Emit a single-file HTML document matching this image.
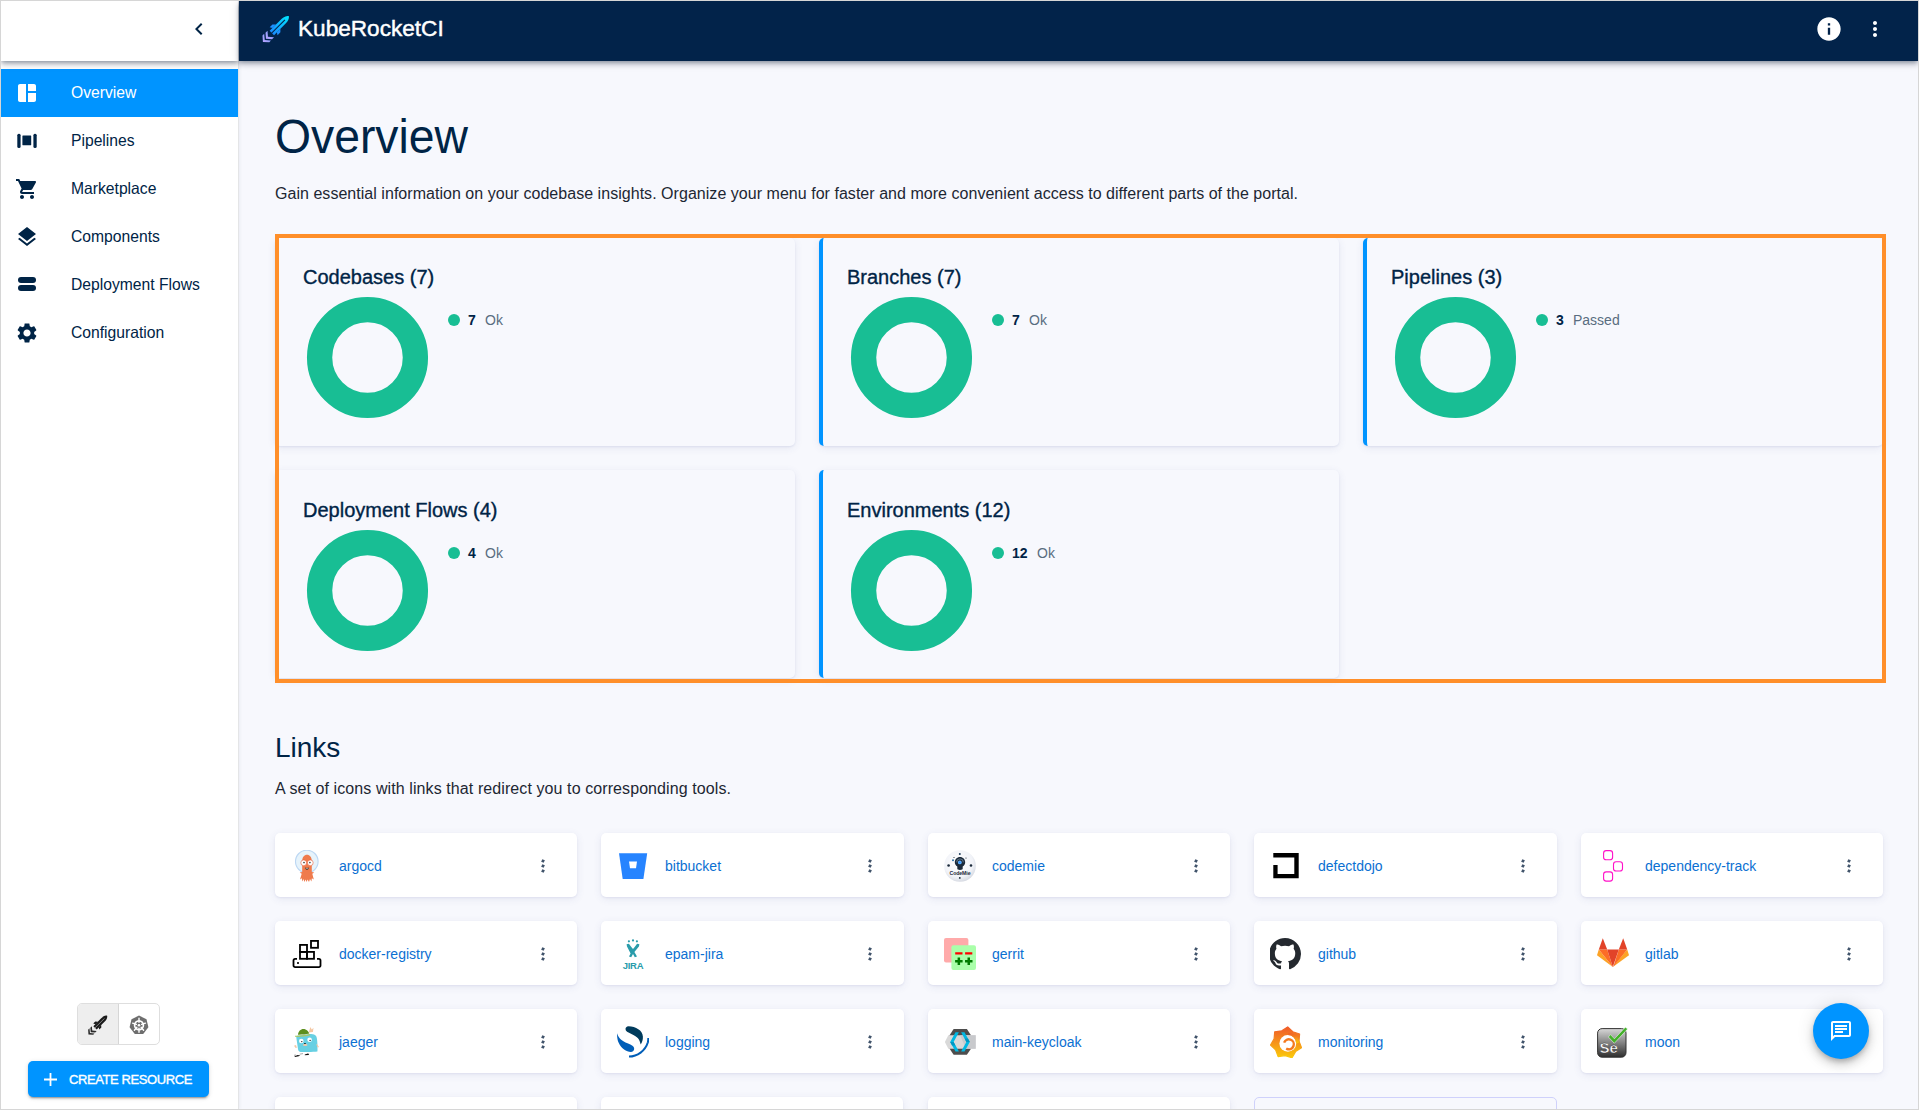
<!DOCTYPE html>
<html><head><meta charset="utf-8">
<style>
*{box-sizing:border-box;margin:0;padding:0}
html,body{width:1919px;height:1110px;overflow:hidden}
body{position:relative;background:#f7f8fd;font-family:"Liberation Sans",sans-serif;color:#002446}
.a{position:absolute}
.t{position:absolute;white-space:nowrap}
#frame{left:0;top:0;width:1919px;height:1110px;border:1px solid #d6d6d6;z-index:50;pointer-events:none}
#sb{left:1px;top:1px;width:238px;height:1108px;background:#fff;border-right:1px solid #e4e5e7;z-index:5;box-shadow:1px 0 3px rgba(40,50,90,.06)}
#topbar{left:1px;top:1px;width:1917px;height:60px;z-index:10}
#hdr{left:238px;top:0;width:1679px;height:60px;background:#02234a;box-shadow:0 2px 4px -1px rgba(10,25,50,.32),0 4px 5px 0 rgba(10,25,50,.16),0 1px 10px 0 rgba(10,25,50,.12)}
#drawerhead{left:0;top:0;width:237px;height:60px;background:#fff;box-shadow:0 2px 4px -1px rgba(10,25,50,.32),0 4px 5px 0 rgba(10,25,50,.16),0 1px 10px 0 rgba(10,25,50,.12)}
.nav{position:absolute;left:0;width:237px;height:48px}
.nav.act{background:#0094ff}
.nav svg{position:absolute;left:14px;top:12px;width:24px;height:24px;fill:#002446}
.nav.act svg{fill:#fff}
.nav span{position:absolute;left:70px;top:15.3px;font-size:16.5px;line-height:16px;transform:scaleX(.95);transform-origin:0 0;color:#002446;white-space:nowrap}
.nav.act span{color:#fff}
.card{position:absolute;width:520px;height:208px;background:#f7f8fd;border-radius:5px;box-shadow:0 1px 2px rgba(60,70,140,.09),0 2px 9px rgba(60,70,140,.09)}
.card.bl{border-left:4px solid #0094ff}
.card .ti{position:absolute;left:28px;top:28.7px;font-size:20px;line-height:20px;font-weight:400;-webkit-text-stroke:.35px #002446;color:#002446;white-space:nowrap}
.card svg.donut{position:absolute;left:31px;top:58px}
.card .bl4{left:24px}
.leg{position:absolute;top:75px;left:173px;height:14px;white-space:nowrap;font-size:14px;line-height:14px}
.leg i{position:absolute;left:0;top:1px;width:12px;height:12px;border-radius:50%;background:#18be94}
.leg b{position:absolute;left:20px;top:0;color:#002446}
.leg em{position:absolute;font-style:normal;top:0;color:#596d80}
.lc{position:absolute;width:302px;height:64px;background:#fff;border-radius:5px;box-shadow:0 1px 2px rgba(60,70,140,.08),0 2px 9px rgba(60,70,140,.09)}
.lc .ic{position:absolute;left:16px;top:17px;width:32px;height:32px}
.lc .lt{position:absolute;left:64px;top:26px;font-size:14px;line-height:14px;color:#0b70d2;white-space:nowrap}
.lc .kb{position:absolute;right:28px;top:23px;width:12px;height:20px;fill:#41546b}
</style></head><body>
<div id="frame" class="a"></div>

<!-- sidebar -->
<div id="sb" class="a">
  <div class="nav act" style="top:68px">
    <svg viewBox="0 0 24 24"><path d="M11 21H5c-1.1 0-2-.9-2-2V5c0-1.1.9-2 2-2h6v18zm2 0h6c1.1 0 2-.9 2-2v-7h-8v9zm8-11V5c0-1.1-.9-2-2-2h-6v7h8z"/></svg>
    <span>Overview</span>
  </div>
  <div class="nav" style="top:116px">
    <svg viewBox="0 0 24 24"><rect x="2.3" y="4.8" width="3.3" height="14.2" rx="1.5"/><rect x="18.4" y="4.8" width="3.3" height="14.2" rx="1.5"/><rect x="7.4" y="6.6" width="8.8" height="9.6" rx=".4"/></svg>
    <span>Pipelines</span>
  </div>
  <div class="nav" style="top:164px">
    <svg viewBox="0 0 24 24"><path d="M7 18c-1.1 0-1.99.9-1.99 2S5.9 22 7 22s2-.9 2-2-.9-2-2-2zM1 2v2h2l3.6 7.59-1.35 2.45c-.16.28-.25.61-.25.96 0 1.1.9 2 2 2h12v-2H7.42c-.14 0-.25-.11-.25-.25l.03-.12.9-1.63h7.45c.75 0 1.41-.41 1.75-1.03l3.58-6.49c.08-.14.12-.31.12-.48 0-.55-.45-1-1-1H5.21l-.94-2H1zm16 16c-1.1 0-1.99.9-1.99 2s.89 2 1.99 2 2-.9 2-2-.9-2-2-2z"/></svg>
    <span>Marketplace</span>
  </div>
  <div class="nav" style="top:212px">
    <svg viewBox="0 0 24 24"><path d="M11.99 18.54l-7.37-5.73L3 14.07l9 7 9-7-1.63-1.27-7.38 5.74zM12 16l7.36-5.73L21 9l-9-7-9 7 1.63 1.27L12 16z"/></svg>
    <span>Components</span>
  </div>
  <div class="nav" style="top:260px">
    <svg viewBox="0 0 24 24"><rect x="3" y="4" width="18" height="6" rx="3"/><rect x="3" y="12" width="18" height="6" rx="3"/></svg>
    <span>Deployment Flows</span>
  </div>
  <div class="nav" style="top:308px">
    <svg viewBox="0 0 24 24"><path d="M19.14 12.94c.04-.3.06-.61.06-.94 0-.32-.02-.64-.07-.94l2.03-1.58c.18-.14.23-.41.12-.61l-1.92-3.32c-.12-.22-.37-.29-.59-.22l-2.39.96c-.5-.38-1.03-.7-1.62-.94l-.36-2.54c-.04-.24-.24-.41-.48-.41h-3.84c-.24 0-.43.17-.47.41l-.36 2.54c-.59.24-1.13.57-1.62.94l-2.39-.96c-.22-.08-.47 0-.59.22L2.74 8.87c-.12.21-.08.47.12.61l2.03 1.58c-.05.3-.09.63-.09.94s.02.64.07.94l-2.03 1.58c-.18.14-.23.41-.12.61l1.92 3.32c.12.22.37.29.59.22l2.39-.96c.5.38 1.03.7 1.62.94l.36 2.54c.05.24.24.41.48.41h3.84c.24 0 .44-.17.47-.41l.36-2.54c.59-.24 1.13-.56 1.62-.94l2.39.96c.22.08.47 0 .59-.22l1.92-3.32c.12-.22.07-.47-.12-.61l-2.01-1.58zM12 15.6c-1.98 0-3.6-1.62-3.6-3.6s1.62-3.6 3.6-3.6 3.6 1.62 3.6 3.6-1.62 3.6-3.6 3.6z"/></svg>
    <span>Configuration</span>
  </div>

  <!-- toggle group -->
  <div class="a" style="left:76px;top:1002px;width:83px;height:42px;border:1px solid #dedede;border-radius:5px;overflow:hidden;background:#fff">
    <div class="a" style="left:0;top:0;width:41px;height:40px;background:#eeeeee;border-right:1px solid #d6d6d6"></div>
    <svg class="a" style="left:10px;top:11px" width="20" height="20" viewBox="0 0 28 28">
      <g transform="translate(26.8 1) rotate(45)">
        <path d="M0 0C3.2 2 3.4 6 3.3 9V24H-3.3V9C-3.4 6-3.2 2 0 0z" fill="#1b1b1b"/>
        <path d="M0 5.5V25" stroke="#9a9a9a" stroke-width="1.1"/>
        <path d="M-3.1 15-6 17.5V21.5L-3.1 20zM3.1 15 6 17.5V21.5L3.1 20z" fill="#1b1b1b"/>
        <path d="M-4.8 25.5 0 29.5 4.8 25.5V28.5L0 32.5-4.8 28.5z" fill="#2a2a2a"/>
        <path d="M-5 30 0 34 5 30V32.6L0 37-5 32.6z" fill="#2a2a2a"/>
      </g>
    </svg>
    <svg class="a" style="left:51px;top:11px" width="20" height="20" viewBox="0 0 20 20">
      <path d="M10 .6 17.5 4.2 19.4 12.3 14.2 18.9H5.8L.6 12.3 2.5 4.2z" fill="#6e6e6e"/>
      <circle cx="10" cy="10.2" r="4.4" fill="none" stroke="#fff" stroke-width="1.7"/>
      <path d="M10 3.3v4M10 13.2v4M3.6 8.2l3.8 1.2M16.4 8.2l-3.8 1.2M5.4 15.3l2.5-3M14.6 15.3l-2.5-3M10 10.2" stroke="#fff" stroke-width="1.4" stroke-linecap="round"/>
      <circle cx="10" cy="10.2" r="1.3" fill="#fff"/>
    </svg>
  </div>
  <!-- create resource -->
  <div class="a" style="left:27px;top:1060px;width:181px;height:36px;background:#0094ff;border-radius:5px;box-shadow:0 3px 1px -2px rgba(0,0,0,.2),0 2px 2px 0 rgba(0,0,0,.14),0 1px 5px 0 rgba(0,0,0,.12)">
    <svg class="a" style="left:16px;top:11.5px" width="13" height="13" viewBox="0 0 13 13"><path d="M5.6 0h1.8v5.6H13v1.8H7.4V13H5.6V7.4H0V5.6h5.6z" fill="#fff"/></svg>
    <div class="t" style="left:41px;top:12px;font-size:13px;line-height:13px;color:#fff;letter-spacing:-.4px;-webkit-text-stroke:.35px #fff">CREATE RESOURCE</div>
  </div>
</div>

<!-- top bar -->
<div id="topbar" class="a">
  <div id="drawerhead" class="a">
    <svg class="a" style="left:186px;top:16px" width="24" height="24" viewBox="0 0 24 24"><path d="M15.41 7.41 14 6l-6 6 6 6 1.41-1.41L10.83 12z" fill="#002446"/></svg>
  </div>
  <div id="hdr" class="a">
    <svg class="a" style="left:23px;top:14px" width="28" height="28" viewBox="0 0 28 28">
      <defs><linearGradient id="rg" x1="0" y1="0" x2="0" y2="1"><stop offset="0" stop-color="#00e8ff"/><stop offset="1" stop-color="#1a8cff"/></linearGradient>
      <linearGradient id="rg2" x1="0" y1="0" x2="0" y2="1"><stop offset="0" stop-color="#8fa0ff"/><stop offset="1" stop-color="#b9a2ff"/></linearGradient></defs>
      <g transform="translate(26.8 1) rotate(45)">
        <path d="M0 0C3 2 3.2 6 3.1 9V24H-3.1V9C-3.2 6-3 2 0 0z" fill="url(#rg)"/>
        <path d="M0 5.5V25" stroke="#02234a" stroke-width="1.1"/>
        <path d="M-3.1 15-5.6 17.5V21.5L-3.1 20zM3.1 15 5.6 17.5V21.5L3.1 20z" fill="#1f8fff"/>
        <path d="M-4.6 25.5 0 29.5 4.6 25.5V28.3L0 32.3-4.6 28.3z" fill="url(#rg2)"/>
        <path d="M-4.8 30 0 34 4.8 30V32.4L0 36.6-4.8 32.4z" fill="url(#rg2)"/>
      </g>
    </svg>
    <div class="t" style="left:59px;top:17px;font-size:22.6px;line-height:21px;font-weight:400;-webkit-text-stroke:.45px #fff;color:#fff">KubeRocketCI</div>
    <svg class="a" style="left:1576px;top:14px" width="28" height="28" viewBox="0 0 24 24"><path d="M12 2C6.48 2 2 6.48 2 12s4.48 10 10 10 10-4.48 10-10S17.52 2 12 2zm1 15h-2v-6h2v6zm0-8h-2V7h2v2z" fill="#fff"/></svg>
    <svg class="a" style="left:1624px;top:16px" width="24" height="24" viewBox="0 0 24 24"><path d="M12 8c1.1 0 2-.9 2-2s-.9-2-2-2-2 .9-2 2 .9 2 2 2zm0 2c-1.1 0-2 .9-2 2s.9 2 2 2 2-.9 2-2-.9-2-2-2zm0 6c-1.1 0-2 .9-2 2s.9 2 2 2 2-.9 2-2-.9-2-2-2z" fill="#fff"/></svg>
  </div>
</div>

<!-- main -->
<div class="t" style="left:275px;top:113px;font-size:49px;line-height:46px;color:#002446;transform:scaleX(.945);transform-origin:0 0">Overview</div>
<div class="t" style="left:275px;top:186px;font-size:16px;line-height:16px;letter-spacing:.035px;color:#1d2733">Gain essential information on your codebase insights. Organize your menu for faster and more convenient access to different parts of the portal.</div>

<!-- overview grid -->
<div class="card" style="left:275px;top:238px">
  <div class="ti">Codebases (7)</div>
  <svg class="donut" width="123" height="123" viewBox="0 0 123 123"><circle cx="61.5" cy="61.5" r="47.9" fill="none" stroke="#18be94" stroke-width="25.3"/></svg>
  <div class="leg"><i></i><b>7</b><em style="left:37px">Ok</em></div>
</div>
<div class="card bl" style="left:819px;top:238px">
  <div class="ti" style="left:24px">Branches (7)</div>
  <svg class="donut" style="left:27px" width="123" height="123" viewBox="0 0 123 123"><circle cx="61.5" cy="61.5" r="47.9" fill="none" stroke="#18be94" stroke-width="25.3"/></svg>
  <div class="leg" style="left:169px"><i></i><b>7</b><em style="left:37px">Ok</em></div>
</div>
<div class="card bl" style="left:1363px;top:238px">
  <div class="ti" style="left:24px">Pipelines (3)</div>
  <svg class="donut" style="left:27px" width="123" height="123" viewBox="0 0 123 123"><circle cx="61.5" cy="61.5" r="47.9" fill="none" stroke="#18be94" stroke-width="25.3"/></svg>
  <div class="leg" style="left:169px"><i></i><b>3</b><em style="left:37px">Passed</em></div>
</div>
<div class="card" style="left:275px;top:470px">
  <div class="ti" style="top:29.5px">Deployment Flows (4)</div>
  <svg class="donut" style="top:59px" width="123" height="123" viewBox="0 0 123 123"><circle cx="61.5" cy="61.5" r="47.9" fill="none" stroke="#18be94" stroke-width="25.3"/></svg>
  <div class="leg" style="top:76px"><i></i><b>4</b><em style="left:37px">Ok</em></div>
</div>
<div class="card bl" style="left:819px;top:470px">
  <div class="ti" style="left:24px;top:29.5px">Environments (12)</div>
  <svg class="donut" style="left:27px;top:59px" width="123" height="123" viewBox="0 0 123 123"><circle cx="61.5" cy="61.5" r="47.9" fill="none" stroke="#18be94" stroke-width="25.3"/></svg>
  <div class="leg" style="left:169px;top:76px"><i></i><b>12</b><em style="left:45px">Ok</em></div>
</div>
<div class="a" style="left:275px;top:234px;width:1611px;height:449px;border:4px solid #ff8f2a;z-index:3"></div>

<!-- links -->
<div class="t" style="left:275px;top:734px;font-size:28px;line-height:28px;color:#002446">Links</div>
<div class="t" style="left:275px;top:781px;font-size:16px;line-height:16px;letter-spacing:.09px;color:#1d2733">A set of icons with links that redirect you to corresponding tools.</div>

<!-- row 1 -->
<div class="lc" style="left:275px;top:833px">
  <svg class="ic" viewBox="0 0 32 32">
    <circle cx="15.8" cy="11.5" r="11.3" fill="#e6f3fb" stroke="#bcd7f3" stroke-width="1.1"/>
    <path d="M11.2 11C11.2 7 13.3 4.7 16 4.7S20.8 7 20.8 11V22L23.3 22.6 21.3 23.8 22.8 29.6 20.9 28.2 20.4 31.6 19 29 18 32 16.6 29.4 15.6 32 14.6 29.4 13.3 32 12.6 29 11.2 31.6 10.9 28.2 9 29.6 10.7 23.8 8.7 22.6 11.2 22z" fill="#ef7b4d"/>
    <circle cx="12.7" cy="12.8" r="2.9" fill="#fff" stroke="#e8603a" stroke-width=".6"/><circle cx="19.3" cy="12.8" r="2.9" fill="#fff" stroke="#e8603a" stroke-width=".6"/>
    <circle cx="13" cy="12.6" r=".8" fill="#333"/><circle cx="18.9" cy="12.6" r=".8" fill="#333"/>
    <path d="M14 17.6c1.4.5 2.6.5 4 0-.3 1.6-1.1 2.2-2 2.2s-1.7-.6-2-2.2z" fill="#222"/><path d="M14.6 17.7c.9.3 1.9.3 2.8 0l-.2.7c-.8.2-1.6.2-2.4 0z" fill="#fff"/>
  </svg>
  <div class="lt">argocd</div>
  <svg class="kb" viewBox="0 0 12 20"><rect x="4.6" y="3.6" width="2.8" height="2.8" transform="rotate(25 6 5)"/><rect x="4.6" y="8.6" width="2.8" height="2.8" transform="rotate(25 6 10)"/><rect x="4.6" y="13.6" width="2.8" height="2.8" transform="rotate(25 6 15)"/></svg>
</div>
<div class="lc" style="left:601px;top:833px;width:303px">
  <svg class="ic" viewBox="0 0 32 32">
    <path d="M2 3.2h28.2L26.4 29H5.7z" fill="#2684ff"/>
    <path d="M12 11.5h8l-1 6.8h-6z" fill="#fff"/>
  </svg>
  <div class="lt">bitbucket</div>
  <svg class="kb" viewBox="0 0 12 20"><rect x="4.6" y="3.6" width="2.8" height="2.8" transform="rotate(25 6 5)"/><rect x="4.6" y="8.6" width="2.8" height="2.8" transform="rotate(25 6 10)"/><rect x="4.6" y="13.6" width="2.8" height="2.8" transform="rotate(25 6 15)"/></svg>
</div>
<div class="lc" style="left:928px;top:833px">
  <svg class="ic" viewBox="0 0 32 32">
    <defs><radialGradient id="cmg" cx=".45" cy=".4" r=".65"><stop offset="0" stop-color="#fff"/><stop offset=".7" stop-color="#f1f3f8"/><stop offset="1" stop-color="#cfd3dc"/></radialGradient></defs>
    <circle cx="16" cy="16" r="15.8" fill="url(#cmg)"/>
    <path d="M16 7c-3 0-5.2 2.3-5.2 5.2 0 1.9 1 3.4 2.5 4.3v2.3c0 .6.9 1.1 2.7 1.1s2.7-.5 2.7-1.1v-2.3c1.5-.9 2.5-2.4 2.5-4.3C21.2 9.3 19 7 16 7z" fill="#1b2a3a"/>
    <path d="M12.6 12.3a3.4 3.4 0 0 1 6.8 0" fill="none" stroke="#8fa6bb" stroke-width=".6"/>
    <circle cx="15.8" cy="12.4" r="1.9" fill="#5fb0ff"/><circle cx="15.8" cy="12.4" r=".9" fill="#2d8cff"/>
    <circle cx="15.8" cy="4" r="1" fill="#1f3d5c"/><circle cx="4.6" cy="15.5" r="1.3" fill="#1b2a3a"/><circle cx="27" cy="15.5" r="1.3" fill="#1b2a3a"/>
    <circle cx="9" cy="10.3" r="1" fill="#2a6fa5"/><circle cx="22" cy="8" r=".6" fill="#1b2a3a"/><circle cx="10" cy="7.5" r=".6" fill="#1b2a3a"/>
    <text x="16" y="25.2" text-anchor="middle" font-family="Liberation Sans" font-weight="700" font-size="5.2" fill="#1b2a3a" letter-spacing="-.1">CodeMie</text>
    <circle cx="15.8" cy="27.9" r=".9" fill="#1b2a3a"/>
  </svg>
  <div class="lt">codemie</div>
  <svg class="kb" viewBox="0 0 12 20"><rect x="4.6" y="3.6" width="2.8" height="2.8" transform="rotate(25 6 5)"/><rect x="4.6" y="8.6" width="2.8" height="2.8" transform="rotate(25 6 10)"/><rect x="4.6" y="13.6" width="2.8" height="2.8" transform="rotate(25 6 15)"/></svg>
</div>
<div class="lc" style="left:1254px;top:833px;width:303px">
  <svg class="ic" viewBox="0 0 32 32">
    <path d="M3.3 3h25.4v25.3H3.3V15h4.3v9h16.7V7.4H3.3z" fill="#000"/>
  </svg>
  <div class="lt">defectdojo</div>
  <svg class="kb" viewBox="0 0 12 20"><rect x="4.6" y="3.6" width="2.8" height="2.8" transform="rotate(25 6 5)"/><rect x="4.6" y="8.6" width="2.8" height="2.8" transform="rotate(25 6 10)"/><rect x="4.6" y="13.6" width="2.8" height="2.8" transform="rotate(25 6 15)"/></svg>
</div>
<div class="lc" style="left:1581px;top:833px">
  <svg class="ic" viewBox="0 0 32 32" fill="none" stroke="#ff10c8" stroke-width="1.1">
    <rect x="6.6" y=".6" width="9" height="9.2" rx="2.6"/>
    <rect x="16.5" y="11.8" width="9" height="9.2" rx="2.6"/>
    <rect x="6.6" y="21.9" width="9" height="9.2" rx="2.6"/>
  </svg>
  <div class="lt">dependency-track</div>
  <svg class="kb" viewBox="0 0 12 20"><rect x="4.6" y="3.6" width="2.8" height="2.8" transform="rotate(25 6 5)"/><rect x="4.6" y="8.6" width="2.8" height="2.8" transform="rotate(25 6 10)"/><rect x="4.6" y="13.6" width="2.8" height="2.8" transform="rotate(25 6 15)"/></svg>
</div>

<!-- row 2 -->
<div class="lc" style="left:275px;top:921px">
  <svg class="ic" viewBox="0 0 32 32" fill="none" stroke="#000" stroke-width="1.8">
    <rect x="20" y="2.9" width="7" height="6.9"/>
    <rect x="9" y="6.9" width="7" height="7"/>
    <rect x="9" y="13.9" width="7" height="6.9"/>
    <rect x="16" y="13.9" width="7" height="6.9"/>
    <path d="M6 20.8H4.1a1.6 1.6 0 0 0-1.6 1.6v5.2a1.6 1.6 0 0 0 1.6 1.6h23.8a1.6 1.6 0 0 0 1.6-1.6v-5.2a1.6 1.6 0 0 0-1.6-1.6H26"/>
    <rect x="6.1" y="24.1" width="1.8" height="1.8" fill="#000" stroke="none"/>
  </svg>
  <div class="lt">docker-registry</div>
  <svg class="kb" viewBox="0 0 12 20"><rect x="4.6" y="3.6" width="2.8" height="2.8" transform="rotate(25 6 5)"/><rect x="4.6" y="8.6" width="2.8" height="2.8" transform="rotate(25 6 10)"/><rect x="4.6" y="13.6" width="2.8" height="2.8" transform="rotate(25 6 15)"/></svg>
</div>
<div class="lc" style="left:601px;top:921px;width:303px">
  <svg class="ic" viewBox="0 0 32 32">
    <g fill="#2a9cab">
      <circle cx="11.9" cy="3.3" r="1.1"/><circle cx="16" cy="2.4" r="1.1"/><circle cx="19.9" cy="3.3" r="1.1"/>
      <path d="M9.6 6.2l2.3-.5 4.1 5.5 4.1-5.5 2.3.5-.5 2.4-4.5 5.4 2.6 4.6-2.2.6-1.8-3.2-1.8 3.2-2.2-.6 1.6-3L10 8.6z"/>
      <path d="M14.8 10.5c.4.5.8.7 1.2.7s.8-.2 1.2-.7" stroke="#2a9cab" stroke-width=".6" fill="none"/>
    </g>
    <text x="16" y="31" text-anchor="middle" font-family="Liberation Sans" font-weight="700" font-size="9.5" fill="#2a9cab" letter-spacing="-.3">JIRA</text>
  </svg>
  <div class="lt">epam-jira</div>
  <svg class="kb" viewBox="0 0 12 20"><rect x="4.6" y="3.6" width="2.8" height="2.8" transform="rotate(25 6 5)"/><rect x="4.6" y="8.6" width="2.8" height="2.8" transform="rotate(25 6 10)"/><rect x="4.6" y="13.6" width="2.8" height="2.8" transform="rotate(25 6 15)"/></svg>
</div>
<div class="lc" style="left:928px;top:921px">
  <svg class="ic" viewBox="0 0 32 32">
    <rect x="0" y="0" width="24.4" height="24.4" rx="2" fill="#ffaaaa"/>
    <rect x="7.4" y="7.3" width="24.6" height="24.6" rx="2" fill="#aaffaa"/>
    <path d="M11.2 14.2h7.3v2.4h-7.3zM21.1 14.2h7.2v2.4h-7.2z" fill="#ff0000"/>
    <path d="M13.6 19.6h2.5v2.5h2.5v2.5h-2.5v2.5h-2.5v-2.5h-2.5v-2.5h2.5zM23.5 19.6H26v2.5h2.5v2.5H26v2.5h-2.5v-2.5H21v-2.5h2.5z" fill="#007d00"/>
  </svg>
  <div class="lt">gerrit</div>
  <svg class="kb" viewBox="0 0 12 20"><rect x="4.6" y="3.6" width="2.8" height="2.8" transform="rotate(25 6 5)"/><rect x="4.6" y="8.6" width="2.8" height="2.8" transform="rotate(25 6 10)"/><rect x="4.6" y="13.6" width="2.8" height="2.8" transform="rotate(25 6 15)"/></svg>
</div>
<div class="lc" style="left:1254px;top:921px;width:303px">
  <svg class="ic" viewBox="0 0 32 32">
    <g transform="translate(-1 0) scale(2)"><path d="M8 0C3.58 0 0 3.58 0 8c0 3.54 2.29 6.53 5.47 7.59.4.07.55-.17.55-.38 0-.19-.01-.82-.01-1.49-2.01.37-2.530-.49-2.69-.94-.09-.23-.48-.94-.82-1.13-.28-.15-.68-.52-.01-.53.63-.01 1.08.58 1.23.82.72 1.21 1.87.87 2.33.66.07-.52.28-.87.51-1.07-1.78-.2-3.64-.89-3.640-3.95 0-.87.31-1.59.82-2.15-.08-.2-.36-1.020.08-2.12 0 0 .67-.21 2.2.82.64-.18 1.32-.27 2-.27.68 0 1.36.09 2 .27 1.53-1.04 2.2-.82 2.2-.82.44 1.1.16 1.92.08 2.12.51.56.82 1.27.82 2.15 0 3.07-1.87 3.75-3.65 3.95.29.25.54.73.54 1.48 0 1.07-.01 1.93-.01 2.2 0 .21.15.46.55.38A8.013 8.013 0 0 0 16 8c0-4.42-3.58-8-8-8z" fill="#24292f"/></g>
  </svg>
  <div class="lt">github</div>
  <svg class="kb" viewBox="0 0 12 20"><rect x="4.6" y="3.6" width="2.8" height="2.8" transform="rotate(25 6 5)"/><rect x="4.6" y="8.6" width="2.8" height="2.8" transform="rotate(25 6 10)"/><rect x="4.6" y="13.6" width="2.8" height="2.8" transform="rotate(25 6 15)"/></svg>
</div>
<div class="lc" style="left:1581px;top:921px">
  <svg class="ic" viewBox="0 0 32 32">
    <path d="M1.8 11.6 0 17.3 15.8 28.9z" fill="#fca326"/><path d="M30.2 11.6 32 17.3 15.8 28.9z" fill="#fca326"/>
    <path d="M1.8 11.6h8.4l5.6 17.3z" fill="#fc6d26"/><path d="M30.2 11.6h-8.4l-5.6 17.3z" fill="#fc6d26"/>
    <path d="M10.2 11.6h11.6l-6 17.3z" fill="#e24329"/>
    <path d="M5.8.3 1.8 11.6h8.4z" fill="#e24329"/><path d="M26.2.3l4 11.3h-8.4z" fill="#e24329"/>
  </svg>
  <div class="lt">gitlab</div>
  <svg class="kb" viewBox="0 0 12 20"><rect x="4.6" y="3.6" width="2.8" height="2.8" transform="rotate(25 6 5)"/><rect x="4.6" y="8.6" width="2.8" height="2.8" transform="rotate(25 6 10)"/><rect x="4.6" y="13.6" width="2.8" height="2.8" transform="rotate(25 6 15)"/></svg>
</div>

<!-- row 3 -->
<div class="lc" style="left:275px;top:1009px">
  <svg class="ic" viewBox="0 0 32 32">
    <path d="M5.2 10.6c.2-.4 1-.9 2.2-1 3.3-.4 7.5-.8 11-1.5 2.8-.5 5.6.3 6.7 1.8.8 1.1 1.2 4.5 1.3 8 .1 3.4.2 6.3 0 7.7-3.9.6-11.8.5-16.7.3-1.3-.1-2.4-1.1-2.6-2.4-.6-4.1-1.9-12.5-1.9-12.9z" fill="#67d0e3"/>
    <path d="M7 8.7c.2-3.6 2.7-5.8 5.4-5.8 3 0 5.3 2.4 5.9 4.6-3.6.8-7.6 1.3-11.3 1.2z" fill="#5d8f1e"/>
    <path d="M4 9.7c2.4.3 9.6-.6 14.7-1.7l.7 1.2C14.6 10.4 7.7 11.3 4 10.8z" fill="#a6c76b"/>
    <path d="M17.8 6.4 19.3.9 20.8 3.5 22.5 1.8 21.9 6z" fill="#f5c7a3"/>
    <circle cx="10.3" cy="15" r="2.3" fill="#fff"/><circle cx="18.6" cy="13.8" r="2.3" fill="#fff"/>
    <circle cx="10.8" cy="15.6" r=".7" fill="#222"/><circle cx="19.1" cy="14.4" r=".7" fill="#222"/>
    <path d="M13 17.3l1.6-.3.2 1-1.6.3z" fill="#111"/>
    <ellipse cx="14.2" cy="19" rx="2.3" ry="1" fill="#f6c8a8"/>
    <path d="M3 19.7l2-.6.9 2.6-1.2.3zM25.1 18.3l1.2.3 1.7 2.4-1.3.6z" fill="#f3c6a5"/>
    <path d="M3.5 30.2l3.2-1.1 2.6.4-1.6.8-3.8.7zM13.8 28.4l3-.9 1.4.6-.7.8-3.7.4z" fill="#111"/><path d="M8.7 28.2l3.3-.6M5 29l-2 .3" stroke="#555" stroke-width=".5"/>
  </svg>
  <div class="lt">jaeger</div>
  <svg class="kb" viewBox="0 0 12 20"><rect x="4.6" y="3.6" width="2.8" height="2.8" transform="rotate(25 6 5)"/><rect x="4.6" y="8.6" width="2.8" height="2.8" transform="rotate(25 6 10)"/><rect x="4.6" y="13.6" width="2.8" height="2.8" transform="rotate(25 6 15)"/></svg>
</div>
<div class="lc" style="left:601px;top:1009px;width:303px">
  <svg class="ic" viewBox="0 0 32 32">
    <path d="M11.5 0c-2 0-3 1.4-3 2.8 0 2 2 3.3 6.4 5.2 5.6 2.4 7.7 5 8.8 10.3 1.5-2.5 2.4-5.1 2.2-8.2C25.6 4.3 18.8 0 11.5 0z" fill="#003b5c" transform="translate(0 .3)"/>
    <path d="M0 7.3c0 .1-.1 5.6 1.8 9.8 2.5 5.7 7.6 8.9 12 8.9 2 0 3.4-1.6 3.4-3.3 0-2.4-2.4-3.8-6.7-5.4C5.1 15.2 1.8 12.7 0 7.3z" fill="#005eb8"/>
    <path d="M12 30.6c8.4 0 16.3-5.8 18.9-14.3.3-1.3.4-2.7.4-4.2" fill="none" stroke="#005eb8" stroke-width="2"/>
  </svg>
  <div class="lt">logging</div>
  <svg class="kb" viewBox="0 0 12 20"><rect x="4.6" y="3.6" width="2.8" height="2.8" transform="rotate(25 6 5)"/><rect x="4.6" y="8.6" width="2.8" height="2.8" transform="rotate(25 6 10)"/><rect x="4.6" y="13.6" width="2.8" height="2.8" transform="rotate(25 6 15)"/></svg>
</div>
<div class="lc" style="left:928px;top:1009px">
  <svg class="ic" viewBox="0 0 32 32">
    <path d="M9.6 3h13.3l4.1 6.2v13.6l-4.1 6H9.6l-4-6V9.2z" fill="#4d4d4d"/>
    <path d="M4.3 9.2h27.4v13.5H4.3L.9 16z" fill="#d9d9d9"/>
    <path d="M16 9.2h15.7v13.5H22z" fill="#c8c9cc"/>
    <path d="M11.5 6.3h3.4L9.6 16l5.3 9.6h-3.4L6.2 16z" fill="#00b8e3"/>
    <path d="M20.5 6.3h-3.4l5.3 9.7-5.3 9.6h3.4l5.3-9.6z" fill="#00b8e3"/>
    <path d="M6.2 16h3.4l1.9 3.4H8z" fill="#0097c3"/><path d="M22.4 16h3.4L24 12.6h-3.4z" fill="#0097c3"/>
  </svg>
  <div class="lt">main-keycloak</div>
  <svg class="kb" viewBox="0 0 12 20"><rect x="4.6" y="3.6" width="2.8" height="2.8" transform="rotate(25 6 5)"/><rect x="4.6" y="8.6" width="2.8" height="2.8" transform="rotate(25 6 10)"/><rect x="4.6" y="13.6" width="2.8" height="2.8" transform="rotate(25 6 15)"/></svg>
</div>
<div class="lc" style="left:1254px;top:1009px;width:303px">
  <svg class="ic" viewBox="0 0 32 32">
    <defs><linearGradient id="gfg" x1="0" y1="0" x2="0" y2="1"><stop offset="0" stop-color="#f05a28"/><stop offset="1" stop-color="#fbca0a"/></linearGradient></defs>
    <polygon points="17.7,0.9 22.8,5.8 29.6,8.0 29.0,15.1 31.5,21.7 25.6,25.6 22.0,31.8 15.2,29.6 8.1,30.6 5.6,23.9 0.5,19.0 4.1,12.9 4.7,5.8 11.8,4.8" fill="url(#gfg)" stroke="url(#gfg)" stroke-width="1.2" stroke-linejoin="round"/>
    <circle cx="17.8" cy="17.4" r="8.4" fill="#fff"/>
    <path d="M17.8 9A8.4 8.4 0 0 1 26.2 17.4L29.6 16.6C29 11 24 7 18.5 7z" fill="url(#gfg)"/>
    <circle cx="18.8" cy="18.3" r="5" fill="none" stroke="#f47a1f" stroke-width="2.4" stroke-dasharray="24 8" transform="rotate(200 18.8 18.3)"/>
  </svg>
  <div class="lt">monitoring</div>
  <svg class="kb" viewBox="0 0 12 20"><rect x="4.6" y="3.6" width="2.8" height="2.8" transform="rotate(25 6 5)"/><rect x="4.6" y="8.6" width="2.8" height="2.8" transform="rotate(25 6 10)"/><rect x="4.6" y="13.6" width="2.8" height="2.8" transform="rotate(25 6 15)"/></svg>
</div>
<div class="lc" style="left:1581px;top:1009px">
  <svg class="ic" viewBox="0 0 32 32">
    <defs><linearGradient id="seg" x1="0" y1="0" x2="0" y2="1"><stop offset="0" stop-color="#d8d8d8"/><stop offset=".45" stop-color="#8a8a8a"/><stop offset="1" stop-color="#2e2e2e"/></linearGradient></defs>
    <rect x=".6" y="2.6" width="28.4" height="28.6" rx="4.5" fill="url(#seg)" stroke="#333" stroke-width="1"/>
    <text x="2.5" y="27" font-family="Liberation Sans" font-weight="700" font-size="15" fill="#fff" stroke="#333" stroke-width=".4">Se</text>
    <path d="M13.5 8.6l3.9 4.2 11-11.6 2.2 1.8-13.3 14.3-5.9-6.3z" fill="#43b02a" stroke="#fff" stroke-width=".5"/>
  </svg>
  <div class="lt">moon</div>
  <svg class="kb" viewBox="0 0 12 20"><rect x="4.6" y="3.6" width="2.8" height="2.8" transform="rotate(25 6 5)"/><rect x="4.6" y="8.6" width="2.8" height="2.8" transform="rotate(25 6 10)"/><rect x="4.6" y="13.6" width="2.8" height="2.8" transform="rotate(25 6 15)"/></svg>
</div>

<!-- row 4 -->
<div class="lc" style="left:275px;top:1097px"></div>
<div class="lc" style="left:601px;top:1097px"></div>
<div class="lc" style="left:928px;top:1097px"></div>
<div class="a" style="left:1254px;top:1097px;width:303px;height:64px;border:1px solid #cfd1fb;border-radius:5px"></div>

<!-- FAB -->
<div class="a" style="left:1813px;top:1003px;width:56px;height:56px;border-radius:50%;background:#0094ff;z-index:20;box-shadow:0 3px 5px -1px rgba(0,0,0,.2),0 6px 10px 0 rgba(0,0,0,.14),0 1px 18px 0 rgba(0,0,0,.12)">
  <svg class="a" style="left:16px;top:16px" width="24" height="24" viewBox="0 0 24 24"><path d="M4 4h16v12H5.17L4 17.17V4m0-2c-1.1 0-1.99.9-1.99 2L2 22l4-4h14c1.1 0 2-.9 2-2V4c0-1.1-.9-2-2-2H4zm2 10h8v2H6v-2zm0-3h12v2H6V9zm0-3h12v2H6V6z" fill="#fff"/></svg>
</div>


</body></html>
